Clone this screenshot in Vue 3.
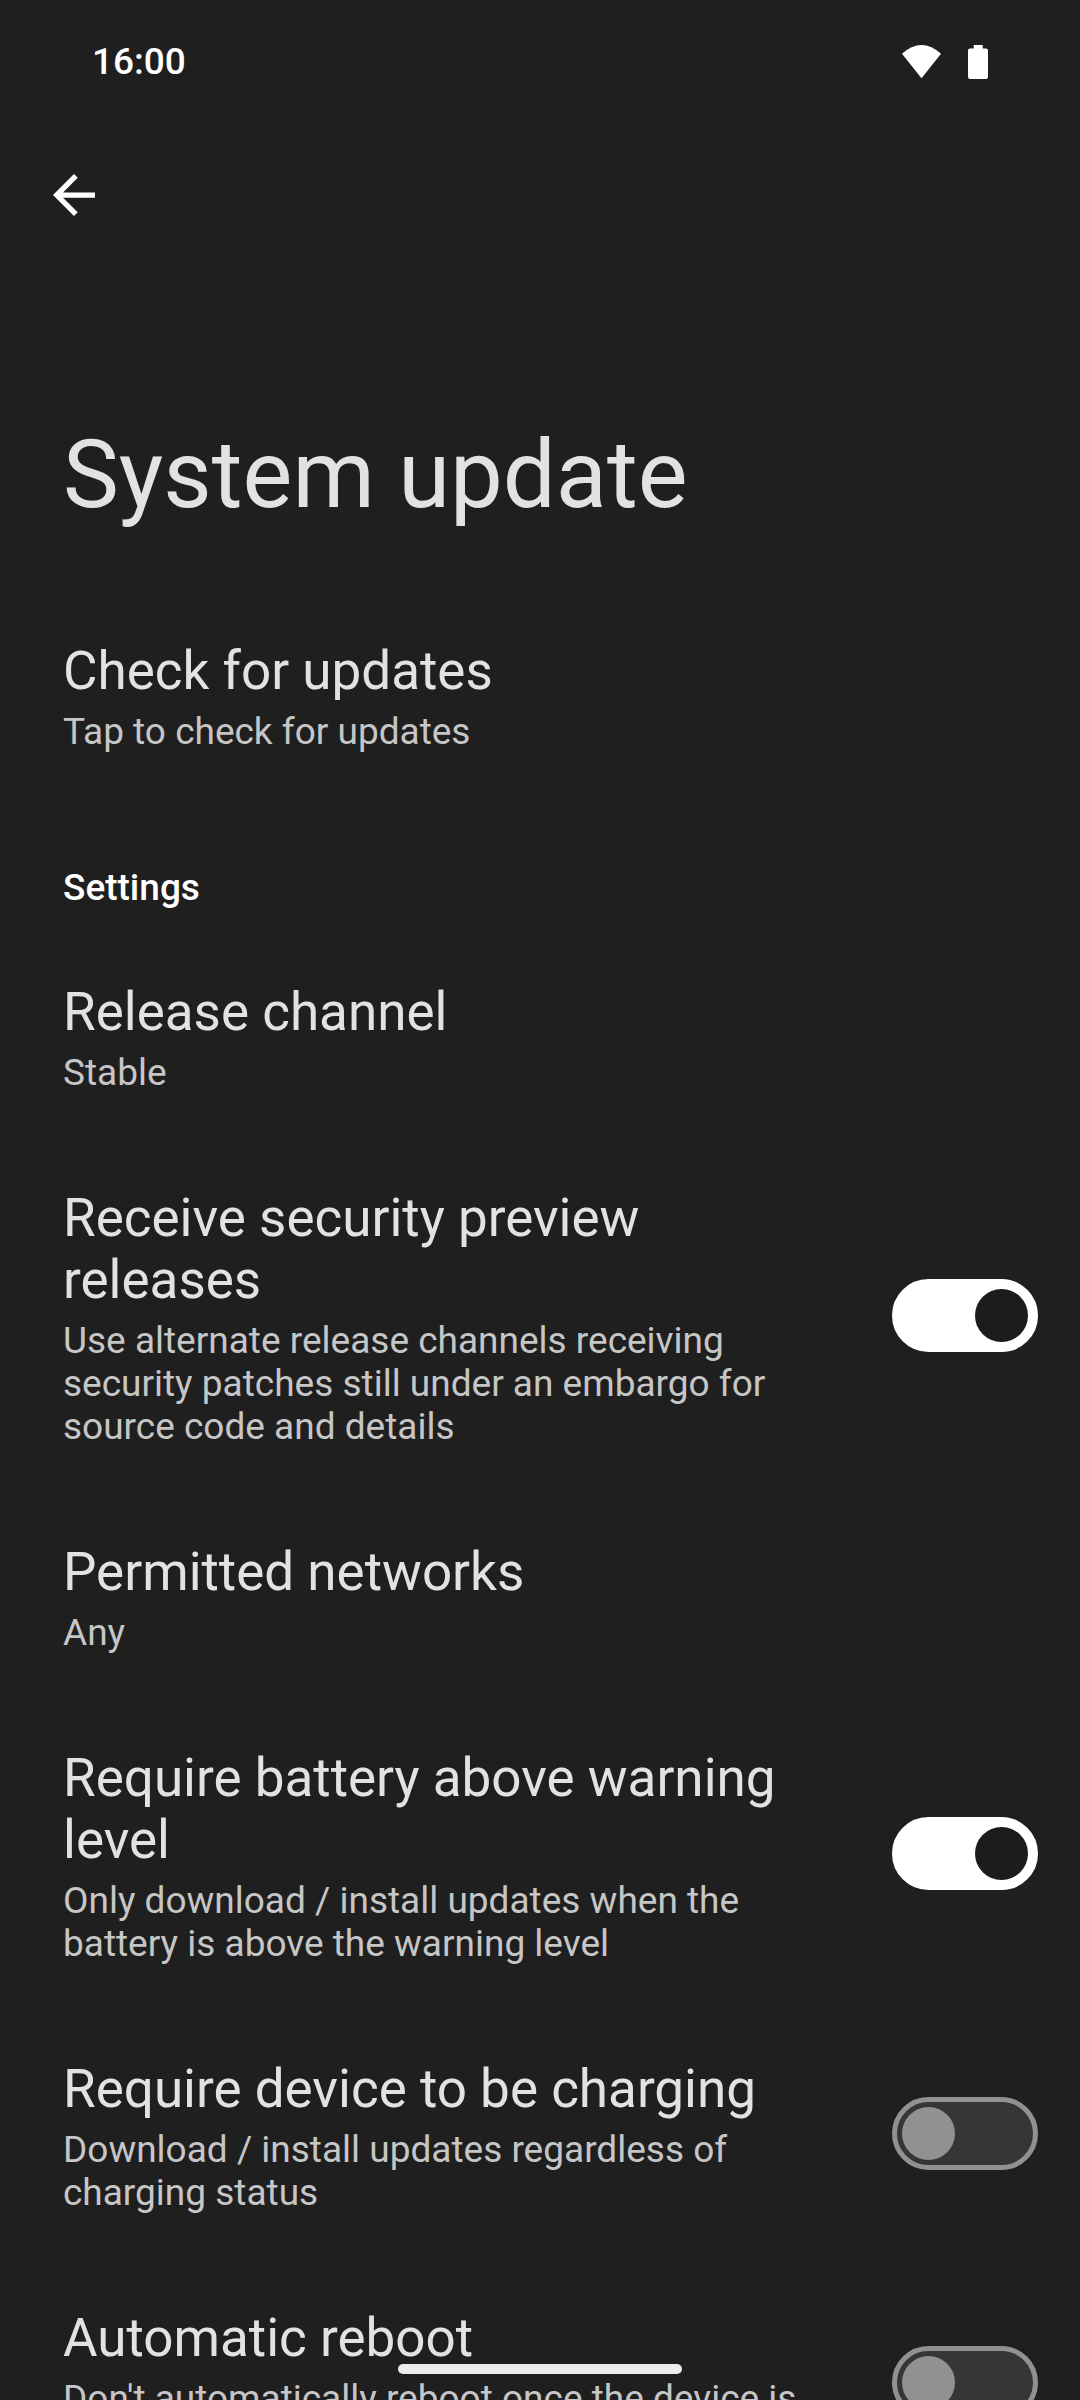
<script setup>
const items = [
  { title: ['Check for updates'], summary: ['Tap to check for updates'], height: 206 },
  { heading: 'Settings', height: 135 },
  { title: ['Release channel'], summary: ['Stable'], height: 206 },
  { title: ['Receive security preview', 'releases'], summary: ['Use alternate release channels receiving', 'security patches still under an embargo for', 'source code and details'], on: true, height: 354 },
  { title: ['Permitted networks'], summary: ['Any'], height: 206 },
  { title: ['Require battery above warning', 'level'], summary: ['Only download / install updates when the', 'battery is above the warning level'], on: true, height: 311 },
  { title: ['Require device to be charging'], summary: ['Download / install updates regardless of', 'charging status'], on: false, height: 249 },
  { title: ['Automatic reboot'], summary: ["Don't automatically reboot once the device is"], on: false, height: 249 },
]
</script>

<template>
  <main class="screen">
    <header class="status">
      <span class="time">16:00</span>
      <div class="status-icons">
        <svg width="39" height="34" viewBox="0 0 39 34"><path d="M19.5 33.3 0 8.8Q19.5-8.6 39 8.8Z" fill="#fff" /></svg>
        <svg width="20" height="34" viewBox="0 0 20 34"><path d="M5.7 0h9v3.4H18q2 0 2 2V32q0 2-2 2H2q-2 0-2-2V5.4q0-2 2-2h3.7z" fill="#fff" /></svg>
      </div>
    </header>
    <nav>
      <svg width="42" height="42" viewBox="0 0 16 16"><path d="M16 7H3.83l5.59-5.59L8 0 0 8l8 8 1.41-1.41L3.83 9H16z" fill="#fff" /></svg>
    </nav>
    <h1>System update</h1>
    <section>
      <div v-for="(item, i) in items" :key="i" class="row" :style="{ height: item.height + 'px' }">
        <h2 v-if="item.heading">{{ item.heading }}</h2>
        <template v-else>
          <div class="text">
            <div v-for="line in item.title" :key="line" class="title">{{ line }}</div>
            <div class="summary"><div v-for="line in item.summary" :key="line">{{ line }}</div></div>
          </div>
          <div v-if="item.on !== undefined" class="switch" :class="{ on: item.on }"><i></i></div>
        </template>
      </div>
    </section>
    <div class="handle"></div>
  </main>
</template>

<style>
body { margin: 0; background: #1f1f1f; }
</style>
<style scoped>
.screen { position: relative; width: 1080px; height: 2400px; overflow: hidden; background: #1f1f1f; color: #e2e2e2; font-family: Roboto, sans-serif; }
.status { height: 124px; box-sizing: border-box; padding: 0 92px; display: flex; align-items: center; justify-content: space-between; color: #fff; }
.time { font-size: 37px; line-height: 43px; font-weight: 500; margin-bottom: 1px; }
.status-icons { display: flex; gap: 27px; }
nav { height: 141px; display: flex; align-items: center; padding-left: 52.7px; }
h1 { margin: 153px 0 0 63px; height: 114px; line-height: 114px; font-size: 94px; font-weight: 400; white-space: nowrap; }
section { margin-top: 62px; }
.row { display: flex; align-items: center; justify-content: space-between; box-sizing: border-box; padding: 0 42px 0 63px; white-space: nowrap; }
h2 { align-self: flex-start; margin: 66px 0 0; font-size: 37px; line-height: 43px; font-weight: 500; color: #fff; }
.text { align-self: flex-start; padding-top: 46px; }
.title { font-size: 53px; line-height: 62px; }
.summary { margin-top: 8px; font-size: 37px; line-height: 43px; color: #c6c6c6; }
.switch { width: 146px; height: 73px; box-sizing: border-box; margin-bottom: 5.5px; border: 5px solid #919191; border-radius: 37px; background: #363636; display: flex; align-items: center; padding: 0 5px; }
.switch i { width: 53px; height: 53px; border-radius: 50%; background: #919191; }
.switch.on { background: #fff; border-color: #fff; justify-content: flex-end; }
.switch.on i { background: #1c1c1c; }
.handle { position: absolute; left: 398px; top: 2364px; width: 284px; height: 10px; border-radius: 5px; background: #ececec; }
</style>
